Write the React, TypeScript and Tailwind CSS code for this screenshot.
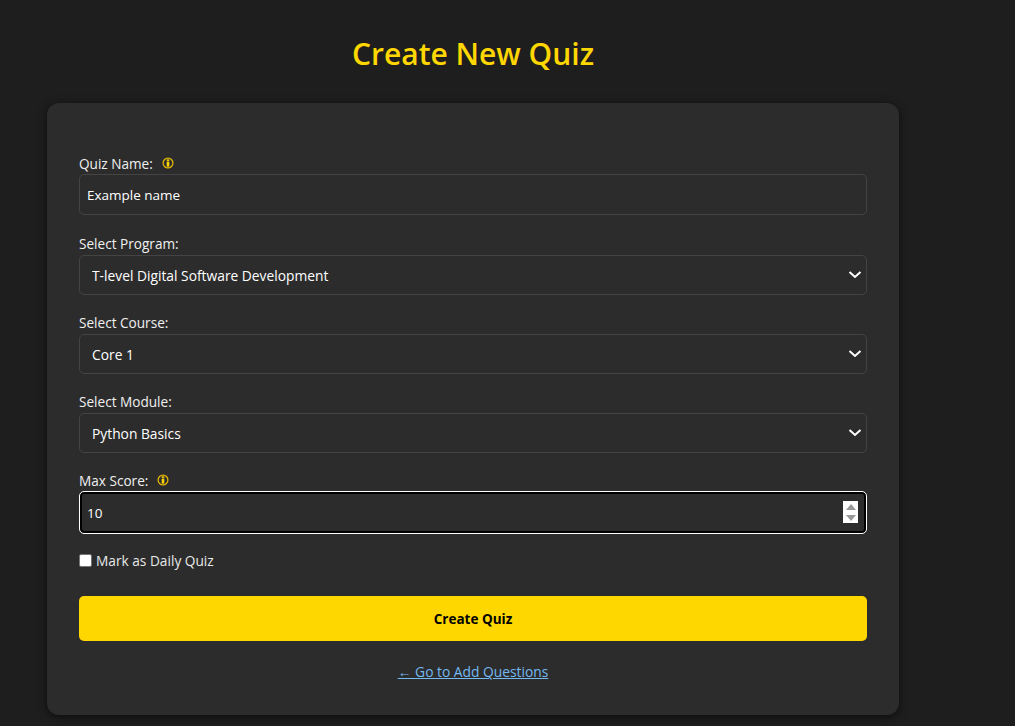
const font = "font-['Open_Sans','Noto_Sans',sans-serif]";

function InfoIcon() {
  return (
    <svg width="12" height="12" viewBox="0 0 12 12" className="-mt-px ml-[9px]" aria-hidden="true">
      <circle cx="6" cy="6" r="4.9" fill="none" stroke="#e3b505" strokeWidth="1.3" />
      <rect x="4.7" y="2.4" width="2.6" height="1.5" fill="#ffd700" />
      <rect x="4.7" y="4.6" width="2.6" height="5" fill="#ffd700" />
    </svg>
  );
}

function Label({ children, info }: { children: React.ReactNode; info?: boolean }) {
  return (
    <label className="flex h-[19px] items-center text-[13.6px] leading-[19px] text-[#f0f0f0]">
      {children}
      {info && <InfoIcon />}
    </label>
  );
}

function Select({ value }: { value: string }) {
  return (
    <div className="relative mt-[2px]">
      <select
        defaultValue={value}
        className="h-10 w-full appearance-none rounded-[5px] border border-[#444] bg-[#2c2c2c] px-3 pt-[2px] text-[13.8px] text-white outline-none"
      >
        <option>{value}</option>
      </select>
      <svg
        width="14"
        height="14"
        viewBox="0 0 14 14"
        className="pointer-events-none absolute right-[5px] top-[13px]"
        aria-hidden="true"
      >
        <path d="M1.5 4 7 9l5.5-5" fill="none" stroke="#fff" strokeWidth="2" />
      </svg>
    </div>
  );
}

export default function App() {
  return (
    <div className={`min-h-screen bg-[#1e1e1e] ${font}`}>
      <div className="ml-[47px] w-[852px] pb-[11px]">
        <h1 className="pb-[29px] pt-[33px] text-center text-[30px] font-semibold leading-[41px] text-[#ffd700]">
          Create New Quiz
        </h1>
        <form className="flex flex-col rounded-xl bg-[#2c2c2c] px-8 pb-[34px] pt-[51px] shadow-[0_2px_10px_rgba(0,0,0,0.6)]">
          <Label info>Quiz Name:</Label>
          <input
            readOnly
            value="Example name"
            className="mt-px h-[41px] rounded-[5px] border border-[#444] bg-[#2c2c2c] px-[7px] text-[13.5px] text-white outline-none"
          />

          <div className="mt-[19px]">
            <Label>Select Program:</Label>
            <Select value="T-level Digital Software Development" />
          </div>
          <div className="mt-[18px]">
            <Label>Select Course:</Label>
            <Select value="Core 1" />
          </div>
          <div className="mt-[18px]">
            <Label>Select Module:</Label>
            <Select value="Python Basics" />
          </div>

          <div className="mt-[18px]">
            <Label info>Max Score:</Label>
            <div className="relative mt-px">
              <input
                readOnly
                value="10"
                className="h-[43px] w-full rounded-[5px] border border-white bg-[#2c2c2c] px-[7px] text-[13.5px] text-white shadow-[inset_0_0_0_2px_#000] outline-none"
              />
              <div className="absolute right-[9px] top-[10px] flex h-[22px] w-[15px] flex-col items-center justify-center gap-[5px] bg-white">
                <span className="h-0 w-0 border-x-[5px] border-b-[6px] border-x-transparent border-b-[#999]" />
                <span className="h-0 w-0 border-x-[5px] border-t-[6px] border-x-transparent border-t-[#999]" />
              </div>
            </div>
          </div>

          <label className="mt-[18px] flex h-[19px] items-center text-[13.7px] text-[#e8e8e8]">
            <input type="checkbox" className="mb-[2px] mr-[4px] h-[13px] w-[13px] appearance-none rounded-[2px] border border-[#767676] bg-white" />
            Mark as Daily Quiz
          </label>

          <button
            type="button"
            className="mt-[25px] h-[45px] rounded-[5px] bg-[#ffd700] pt-px text-[13.5px] font-bold text-black"
          >
            Create Quiz
          </button>

          <a href="#" className="mt-[21px] text-center text-[13.8px] leading-[19px] text-[#74b9f0] underline">
            ← Go to Add Questions
          </a>
        </form>
      </div>
    </div>
  );
}
